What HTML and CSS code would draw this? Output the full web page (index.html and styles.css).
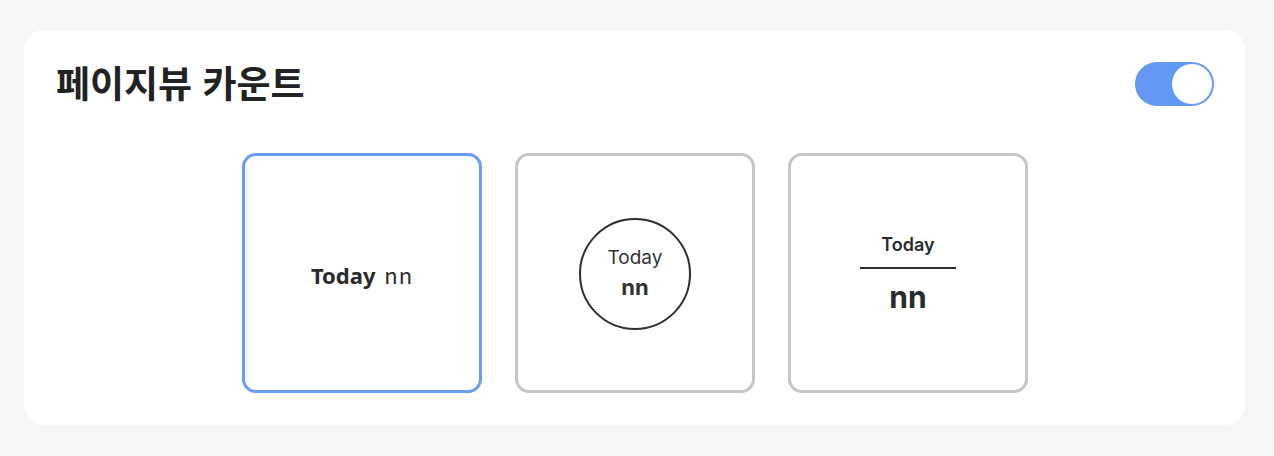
FILE: index.html
```html
<!DOCTYPE html>
<html lang="ko">
<head>
<meta charset="utf-8">
<title>페이지뷰 카운트</title>
<link rel="stylesheet" href="styles.css">
</head>
<body>
<div class="page">
  <section class="card">
    <header class="card-header">
      <h1 class="title">페이지뷰 카운트</h1>
      <div class="toggle is-on" role="switch" aria-checked="true"><span class="knob"></span></div>
    </header>
    <div class="options">
      <div class="option selected">
        <span class="inline-label"><b>Today</b> <span class="inline-num">nn</span></span>
      </div>
      <div class="option">
        <div class="circle">
          <span class="circle-label">Today</span>
          <span class="circle-num">nn</span>
        </div>
      </div>
      <div class="option">
        <div class="stack">
          <span class="stack-label">Today</span>
          <span class="stack-line"></span>
          <span class="stack-num">nn</span>
        </div>
      </div>
    </div>
  </section>
</div>
</body>
</html>
```

FILE: styles.css
```css
* { box-sizing: border-box; }
html, body { margin: 0; padding: 0; }
body {
  background: #f6f6f6;
  font-family: "Noto Sans", "Noto Sans CJK KR", sans-serif;
  color: #222;
}
.page {
  padding: 30px 29px 0 24px;
}
.card {
  background: #fff;
  border-radius: 20px;
  height: 395px;
  padding: 32px 31px 0 32px;
}
.card-header {
  display: flex;
  justify-content: space-between;
  align-items: center;
}
.title {
  margin: 0;
  font-family: "Noto Sans CJK KR", sans-serif;
  font-weight: 700;
  font-size: 37px;
  line-height: 40px;
  letter-spacing: 0;
  color: #222;
  position: relative;
  top: -2px;
}
.toggle {
  width: 79px;
  height: 44px;
  border-radius: 22px;
  background: #6398f6;
  display: flex;
  justify-content: flex-end;
  align-items: center;
  padding: 1px;
}
.knob {
  width: 42px;
  height: 42px;
  border-radius: 50%;
  background: #fff;
  border: 1px solid #6398f6;
}
.options {
  display: flex;
  justify-content: center;
  gap: 33px;
  margin-top: 47px;
}
.option {
  width: 240px;
  height: 240px;
  border: 3px solid #c6c6c6;
  border-radius: 14px;
  display: flex;
  align-items: center;
  justify-content: center;
  color: #2a2a2a;
}
.option.selected {
  border-color: #6a9cf2;
}
.inline-label {
  font-family: "Noto Sans", sans-serif;
  font-size: 22px;
  margin-top: 2px;
}
.inline-label b { font-weight: 700; }
.inline-num {
  font-family: "Noto Sans CJK KR", sans-serif;
  font-weight: 400;
  margin-left: 3px;
  letter-spacing: 1px;
}
.circle {
  width: 112px;
  height: 112px;
  border: 2px solid #2e2e2e;
  border-radius: 50%;
  display: flex;
  flex-direction: column;
  align-items: center;
  justify-content: center;
  margin-top: 1px;
}
.circle-label {
  font-family: Inter, sans-serif;
  font-size: 19px;
  font-weight: 400;
  line-height: 27px;
  color: #333;
}
.circle-num {
  font-family: Inter, sans-serif;
  font-size: 22px;
  font-weight: 700;
  line-height: 32px;
  color: #333;
}
.stack {
  display: flex;
  flex-direction: column;
  align-items: center;
  margin-top: 1px;
}
.stack-label {
  font-family: Inter, sans-serif;
  font-size: 18px;
  font-weight: 600;
  line-height: 24px;
  color: #2a2a2a;
}
.stack-line {
  width: 96px;
  height: 2px;
  background: #2e2e2e;
  margin: 10px 0 10px;
}
.stack-num {
  font-family: Inter, sans-serif;
  font-size: 30px;
  font-weight: 700;
  line-height: 36px;
  color: #2a2a2a;
}
```
